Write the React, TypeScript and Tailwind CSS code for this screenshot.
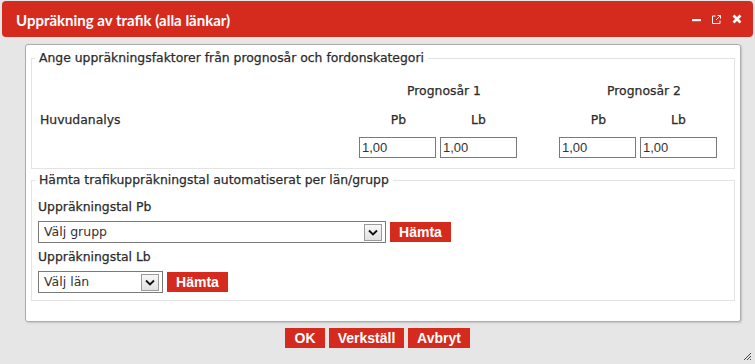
import React from "react";

const RED = "bg-[#d52b1f]";

function Chevron() {
  return (
    <svg width="10" height="7" viewBox="0 0 10 7">
      <path d="M1 1.5 L5 5.5 L9 1.5" fill="none" stroke="#111" strokeWidth="1.8" />
    </svg>
  );
}

function Select({ text, width }: { text: string; width: string }) {
  return (
    <div className={`${width} h-[22px] border border-[#7a7a7a] bg-white flex items-center justify-between pl-[5px] pr-[3px]`}>
      <span className="text-[12.5px] text-[#333] leading-none [-webkit-text-stroke:0px]">{text}</span>
      <div className="w-[18px] h-[17px] border border-[#9a9a9a] bg-gradient-to-b from-[#f7f7f7] to-[#e2e2e2] flex items-center justify-center">
        <Chevron />
      </div>
    </div>
  );
}

function RedButton({ children, className = "" }: { children: React.ReactNode; className?: string }) {
  return (
    <div className={`${RED} h-[20px] flex items-center justify-center text-white font-bold font-['Liberation_Sans',Arial,sans-serif] text-[14px] [-webkit-text-stroke:0px] ${className}`}>
      {children}
    </div>
  );
}

function NumInput() {
  return (
    <div className="w-[77px] h-[21px] border border-[#7a7a7a] bg-white flex items-center pl-[2px] text-[13px] text-[#333] font-['Liberation_Sans',Arial,sans-serif] [-webkit-text-stroke:0px]">
      1,00
    </div>
  );
}

export default function App() {
  return (
    <div className="w-[755px] h-[364px] bg-[#e6e6e6] relative overflow-hidden font-['DejaVu_Sans',Verdana,sans-serif] text-[#2b2b2b] text-[12.4px] [-webkit-text-stroke:0.25px_#2b2b2b]">
      {/* Title bar */}
      <div className={`${RED} mx-[2px] mt-[1px] h-[36px] rounded-[4px] flex items-center justify-between pl-[14px] pr-[11px]`}>
        <span className="text-white font-bold font-['Lato',sans-serif] text-[15px] mt-[3px] [-webkit-text-stroke:0px]">Uppräkning av trafik (alla länkar)</span>
        <div className="flex items-center gap-[11px] text-white">
          <svg width="9" height="9" viewBox="0 0 9 9">
            <rect x="0" y="4" width="9" height="2.2" fill="#fff" />
          </svg>
          <svg width="9" height="9" viewBox="0 0 9 9">
            <path d="M3.5 1 H0.5 V8.5 H8 V5.5" fill="none" stroke="#fff" strokeWidth="1" />
            <path d="M4 5 L8.5 0.5 M5.5 0.5 H8.5 V3.5" fill="none" stroke="#fff" strokeWidth="1" />
          </svg>
          <svg width="10" height="10" viewBox="0 0 10 10">
            <path d="M1.5 1.5 L8.5 8.5 M8.5 1.5 L1.5 8.5" stroke="#fff" strokeWidth="2.6" />
          </svg>
        </div>
      </div>

      {/* Panel */}
      <div className="ml-[25px] mt-[7px] w-[716px] h-[278px] bg-white border border-[#acacac] rounded-[3px] shadow-[1px_1px_2px_rgba(0,0,0,0.15)] px-[5px] pt-[5px]">
        <fieldset className="border border-[#e3e3e3] pl-[3px] pb-[10px]">
          <legend className="px-[4px] leading-[16px]">Ange uppräkningsfaktorer från prognosår och fordonskategori</legend>
          <div className="grid grid-cols-[324px_81px_81px_38px_81px_81px] mt-[15px]">
            <div className="h-[20px]" />
            <div className="col-span-2 h-[20px] flex items-center justify-center pl-[8px] pr-[0px]">Prognosår 1</div>
            <div />
            <div className="col-span-2 h-[20px] flex items-center justify-center pl-[8px]">Prognosår 2</div>

            <div className="h-[20px] mt-[9px] flex items-center pl-[5px]">Huvudanalys</div>
            <div className="w-[77px] h-[20px] mt-[9px] flex items-center justify-center pl-[2px]">Pb</div>
            <div className="w-[77px] h-[20px] mt-[9px] flex items-center justify-center">Lb</div>
            <div />
            <div className="w-[77px] h-[20px] mt-[9px] flex items-center justify-center pl-[2px]">Pb</div>
            <div className="w-[77px] h-[20px] mt-[9px] flex items-center justify-center">Lb</div>

            <div className="mt-[7px]" />
            <div className="mt-[7px]"><NumInput /></div>
            <div className="mt-[7px]"><NumInput /></div>
            <div />
            <div className="mt-[7px]"><NumInput /></div>
            <div className="mt-[7px]"><NumInput /></div>
          </div>
        </fieldset>

        <fieldset className="mt-[3px] border border-[#e3e3e3] pl-[3px] pb-[7px]">
          <legend className="px-[4px] leading-[16px]">Hämta trafikuppräkningstal automatiserat per län/grupp</legend>
          <div className="pl-[3px] mt-[11px] flex flex-col">
            <div className="h-[16px] leading-[16px]">Uppräkningstal Pb</div>
            <div className="flex items-center gap-[4px] mt-[6px]">
              <Select text="Välj grupp" width="w-[348px]" />
              <RedButton className="w-[61px]">Hämta</RedButton>
            </div>
            <div className="h-[16px] leading-[16px] mt-[6px]">Uppräkningstal Lb</div>
            <div className="flex items-center gap-[4px] mt-[6px]">
              <Select text="Välj län" width="w-[125px]" />
              <RedButton className="w-[61px]">Hämta</RedButton>
            </div>
          </div>
        </fieldset>
      </div>

      {/* Buttons */}
      <div className="flex justify-center gap-[4px] mt-[6px]">
        <RedButton className="w-[40px]">OK</RedButton>
        <RedButton className="w-[75px]">Verkställ</RedButton>
        <RedButton className="w-[62px]">Avbryt</RedButton>
      </div>

      {/* Resize grip */}
      <svg className="absolute right-[3px] bottom-[3px]" width="10" height="10" viewBox="0 0 10 10">
        <path d="M9 2 L2 9 M9 5 L5 9 M9 8 L8 9" stroke="#444" strokeWidth="1" />
      </svg>
    </div>
  );
}
